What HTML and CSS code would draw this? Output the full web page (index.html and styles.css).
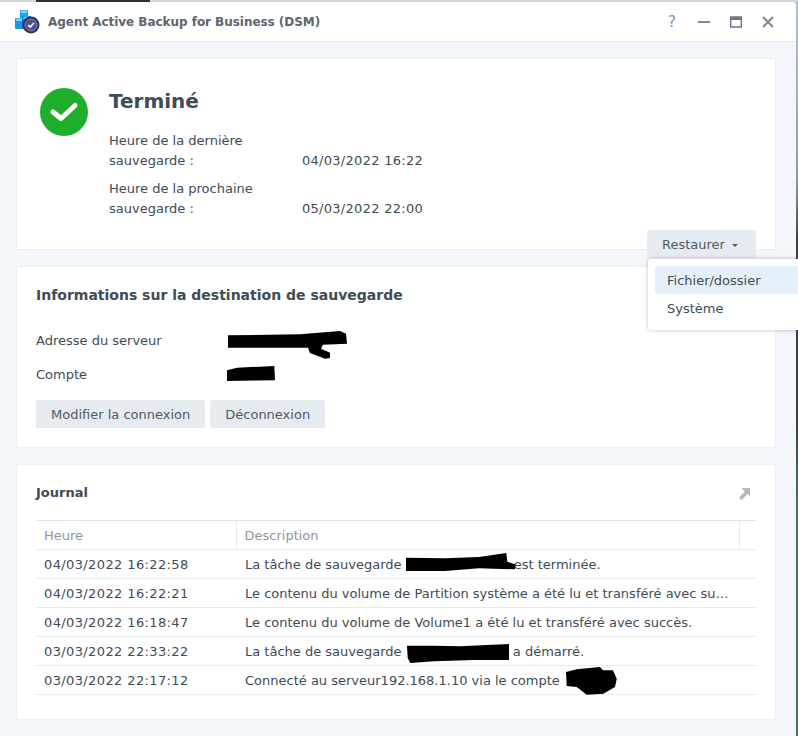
FILE: index.html
```html
<!DOCTYPE html>
<html lang="fr">
<head>
<meta charset="utf-8">
<title>Agent Active Backup for Business (DSM)</title>
<link rel="stylesheet" href="styles.css">
</head>
<body>
<div class="desktop-strip"></div>
<div class="window">
  <header class="titlebar">
    <svg class="app-icon" width="26" height="26" viewBox="0 0 26 26">
      <rect x="6" y="1" width="8" height="8" rx="1" fill="#1fa3ea"/>
      <rect x="7" y="1.500" width="6" height="2.500" fill="#7adcfa"/>
      <rect x="1" y="9" width="9" height="11" rx="1" fill="#1c97e6"/>
      <rect x="2" y="9.500" width="6" height="2.500" fill="#6fd6f8"/>
      <rect x="8" y="7" width="9" height="13" rx="1" fill="#1578cc"/>
      <rect x="9" y="7.500" width="6" height="2.500" fill="#57c0f0"/>
      <circle cx="17" cy="16" r="8.500" fill="#2f3058"/>
      <circle cx="17" cy="16" r="6" fill="#4a5088" stroke="#9296c8" stroke-width=".8"/>
      <path d="M14.200 16l2 2 3.800-4" fill="none" stroke="#fff" stroke-width="1.600"/>
    </svg>
    <h1 class="app-title">Agent Active Backup for Business (DSM)</h1>
    <div class="win-controls">
      <span class="help">?</span>
      <svg width="12" height="12" viewBox="0 0 12 12"><rect x="0" y="5" width="12" height="2" fill="#7f8894"/></svg>
      <svg width="12" height="12" viewBox="0 0 12 12"><path d="M.7 1h10.600v10H.7z" fill="none" stroke="#6f7884" stroke-width="1.400"/><rect x="0" y="1" width="12" height="3" fill="#6f7884"/></svg>
      <svg width="12" height="12" viewBox="0 0 12 12"><path d="M1 1l10 10M11 1L1 11" stroke="#7f8894" stroke-width="2" fill="none"/></svg>
    </div>
  </header>
  <main class="content">
    <section class="card status-card">
      <svg class="status-icon" width="48" height="48" viewBox="0 0 48 48">
        <circle cx="24" cy="24" r="24" fill="#1fae2b"/>
        <path d="M13 24l8 6.500L35 17.500" fill="none" stroke="#fff" stroke-width="5" stroke-linecap="round" stroke-linejoin="round"/>
      </svg>
      <div class="status-body">
        <h2 class="status-title">Terminé</h2>
        <div class="status-row">
          <div class="status-label">Heure de la dernière sauvegarde :</div>
          <div class="status-value date">04/03/2022 16:22</div>
        </div>
        <div class="status-row">
          <div class="status-label">Heure de la prochaine sauvegarde :</div>
          <div class="status-value date">05/03/2022 22:00</div>
        </div>
      </div>
      <button class="btn restore-btn">Restaurer <span class="caret"></span></button>
    </section>

    <section class="card dest-card">
      <h2 class="section-title">Informations sur la destination de sauvegarde</h2>
      <div class="info-row">
        <span class="info-label">Adresse du serveur</span>
        <svg class="redact redact-server" width="120" height="28" viewBox="0 0 120 28"><path d="M0 4.300L72 3.300 112 0 118 2.700 119 12.700 95 13.700 93 17.700 102 21.700 102 27 97 27.700 82 22 80 16.700 0 16.700z"/></svg>
      </div>
      <div class="info-row">
        <span class="info-label">Compte</span>
        <svg class="redact redact-account" width="48" height="16" viewBox="0 0 48 16"><path d="M0 4.300L10 1.700 47.300 0 48 14.300 0 15z"/></svg>
      </div>
      <div class="btn-row">
        <button class="btn">Modifier la connexion</button>
        <button class="btn">Déconnexion</button>
      </div>
    </section>

    <section class="card log-card">
      <div class="log-head">
        <h2 class="log-title">Journal</h2>
        <svg class="open-icon" width="11" height="12" viewBox="0 0 12 13"><path d="M3 0h9v9L9.500 6.500 3 13 0 10.500 6 4z" fill="#b4b9bf"/></svg>
      </div>
      <table class="log-table">
        <colgroup><col class="col-time"><col><col class="col-end"></colgroup>
        <thead><tr><th>Heure</th><th>Description</th><th></th></tr></thead>
        <tbody>
          <tr><td class="date-long">04/03/2022 16:22:58</td><td colspan="2"><span class="cell">La tâche de sauvegarde <span class="gap gap-a"><svg width="110" height="19" viewBox="0 0 110 19"><path d="M0 4.700L39 5.300 73 4 100.300 0 101.300 8.700 109 11.300 109 16.300 73 15.300 39 18 0 18z"/></svg></span>est terminée.</span></td></tr>
          <tr><td class="date-long">04/03/2022 16:22:21</td><td colspan="2"><span class="cell">Le contenu du volume de Partition système a été lu et transféré avec succès.</span></td></tr>
          <tr><td class="date-long">04/03/2022 16:18:47</td><td colspan="2"><span class="cell">Le contenu du volume de Volume1 a été lu et transféré avec succès.</span></td></tr>
          <tr><td class="date-long">03/03/2022 22:33:22</td><td colspan="2"><span class="cell">La tâche de sauvegarde <span class="gap gap-b"><svg width="103" height="20" viewBox="0 0 103 20"><path d="M0 1.700L27 1.700 53 2.300 102 0 102 16 67 16 27 17.300 3.300 19 .7 14z"/></svg></span> a démarré.</span></td></tr>
          <tr><td class="date-long">03/03/2022 22:17:12</td><td colspan="2"><span class="cell">Connecté au serveur192.168.1.10 via le compte <span class="gap gap-c"><svg width="52" height="28" viewBox="0 0 52 28"><path d="M0 5L10.700 2.300 34 0 37 3.300 47 3.300 50.700 11.700 49 20 37.300 26.700 20.700 27.700 10.700 20 .7 19z"/></svg></span></span></td></tr>
        </tbody>
      </table>
    </section>
  </main>
</div>
<div class="menu">
  <div class="menu-item active">Fichier/dossier</div>
  <div class="menu-item">Système</div>
</div>
</body>
</html>
```

FILE: styles.css
```css
* { box-sizing: border-box; }
html, body { margin: 0; height: 736px; overflow: hidden; }
body {
  position: relative;
  font-family: "DejaVu Sans", Verdana, sans-serif;
  font-size: 13px;
  color: #414b55;
  background: linear-gradient(#b7c0c8 0, #8e9aa3 180px, #3c4045 240px, #3a3f42 420px, #3f7a5c 500px, #3f7a5c 736px);
}
.desktop-strip {
  height: 2px;
  background: linear-gradient(90deg, #d5d6d6 36px, #2a333d 36px, #2a333d 150px, #d5d6d6 150px);
}
.window {
  width: 796px;
  height: 734px;
  background: #f3f6fa;
  border-top-right-radius: 4px;
}
.titlebar {
  height: 40px;
  display: flex;
  align-items: center;
  padding: 0 22px 0 14px;
  background: #fff;
  border-bottom: 1px solid #e3e6ea;
  border-top-right-radius: 4px;
}
.app-icon { margin-right: 8px; }
.app-title {
  margin: 0;
  flex: 1;
  font-size: 12px;
  font-weight: 700;
  letter-spacing: -.04px;
  color: #5d6570;
}
.win-controls { display: flex; align-items: center; gap: 20px; }
.help { width: 12px; font-size: 16px; color: #8c949d; text-align: center; }
.content {
  padding: 16px 20px 0 16px;
  display: flex;
  flex-direction: column;
  gap: 16px;
}
.card {
  background: #fff;
  border: 1px solid #eceff3;
  border-radius: 2px;
}
.status-card {
  position: relative;
  height: 192px;
  display: flex;
  padding: 28px 23px;
  gap: 21px;
}
.status-icon { margin-top: 1px; }
.status-body { flex: 1; }
.status-title {
  margin: 0 0 16px;
  font-size: 20px;
  line-height: 28px;
  font-weight: 700;
  color: #414b55;
}
.status-row { display: flex; align-items: flex-end; line-height: 20px; margin-bottom: 8px; }
.status-label { width: 193px; padding-right: 40px; }
.date { letter-spacing: .28px; }
.date-long { letter-spacing: .38px; }
.restore-btn { position: absolute; right: 19px; top: 171px; width: 109px; padding: 0 14px; text-align: left; }
.btn {
  height: 28px;
  padding: 0 15px;
  border: 0;
  border-radius: 3px;
  background: #e6ebf2;
  color: #505a64;
  font: inherit;
}
.caret {
  display: inline-block;
  margin-left: 3px;
  vertical-align: middle;
  border: 3.500px solid transparent;
  border-top-color: #505a64;
  border-bottom: 0;
}
.dest-card { height: 182px; padding: 18px 19px 0; }
.section-title { margin: 0 0 18px; font-size: 14px; line-height: 20px; font-weight: 700; color: #414b55; }
.info-row { display: flex; align-items: center; height: 34px; }
.info-label { width: 192px; }
.redact { fill: #000; display: block; flex: none; }
.redact-server { margin-top: 9px; }
.redact-account { margin-left: -1px; }
.btn-row { display: flex; gap: 5px; margin-top: 9px; }
.log-card { height: 256px; padding: 18px 19px 0; }
.log-head {
  display: flex;
  justify-content: space-between;
  align-items: center;
  height: 18px;
  padding-right: 6px;
  margin-bottom: 19px;
}
.log-title { margin: 0; font-size: 13px; font-weight: 700; color: #414b55; }
.open-icon { margin-top: 4px; }
.log-table { width: 720px; table-layout: fixed; border-collapse: collapse; border-top: 1px solid #dfe2e6; }
.col-time { width: 200px; }
.col-end { width: 17px; }
.log-table th, .log-table td {
  height: 29px;
  padding: 0 8px;
  border-bottom: 1px solid #e8ebee;
  text-align: left;
  font-weight: 400;
  white-space: nowrap;
}
.log-table td + td { padding-left: 9px; }
.log-table th { color: #8f969e; border-left: 1px solid #e8ebee; }
.log-table th:first-child { border-left: 0; }
.cell { display: block; max-width: 484px; overflow: hidden; text-overflow: ellipsis; }
.cell:has(.gap) { overflow: visible; }
.gap { display: inline-block; position: relative; height: 1px; vertical-align: baseline; }
.gap svg { position: absolute; fill: #000; }
.gap-a { width: 108px; }
.gap-a svg { top: -15px; left: 0; }
.gap-b { width: 103px; }
.gap-b svg { top: -11px; left: 1px; }
.gap-c { width: 52px; }
.gap-c svg { top: -17px; left: 2px; }
.menu {
  position: absolute;
  left: 648px;
  top: 259px;
  width: 170px;
  height: 71px;
  padding: 7px;
  background: #fff;
  border-radius: 3px;
  box-shadow: 0 0 4px rgba(60, 70, 85, .35);
}
.menu-item { height: 28px; line-height: 29px; padding: 0 12px; border-radius: 3px; }
.menu-item.active { background: #e6f0fb; }
```
